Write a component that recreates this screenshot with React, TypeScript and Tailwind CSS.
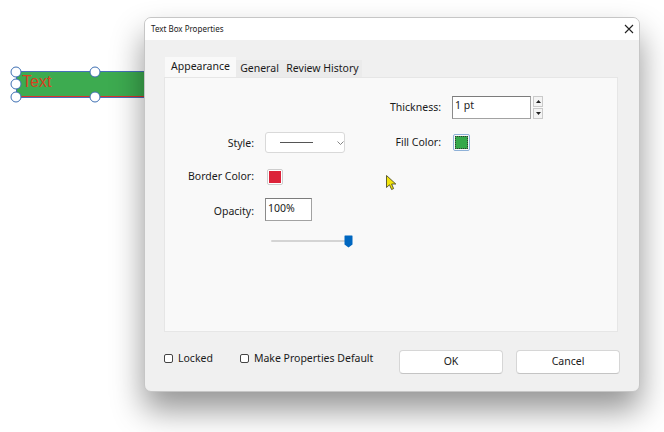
import React from "react";

const ui = "font-['Noto_Sans','Open_Sans',sans-serif]";

function Handle({ x, y }: { x: number; y: number }) {
  return (
    <div
      className="absolute h-[11px] w-[11px] -translate-x-1/2 -translate-y-1/2 rounded-full border-[1.5px] border-[#3d6fb3] bg-white"
      style={{ left: x, top: y }}
    />
  );
}

function Checkbox({ label }: { label: string }) {
  return (
    <label className="flex items-center gap-[5px] text-[10.5px] leading-[14px] text-[#1a1a1a]">
      <span className="h-[9px] w-[9px] rounded-[2px] border border-[#444] bg-white" />
      {label}
    </label>
  );
}

function Button({ children }: { children: React.ReactNode }) {
  return (
    <button className="flex h-[24px] w-[104px] items-center justify-center rounded-[4px] border border-[#d6d6d6] border-b-[#c4c4c4] bg-white text-[10.5px] text-[#1a1a1a]">
      {children}
    </button>
  );
}

function Label({ w, children, down = "" }: { w: string; children: React.ReactNode; down?: string }) {
  return <span className={`${w} ${down} shrink-0 text-right text-[10.5px] text-[#1a1a1a]`}>{children}</span>;
}

export default function App() {
  return (
    <div className={`relative h-[432px] w-[664px] overflow-hidden bg-white ${ui}`}>
      {/* text box on the canvas */}
      <div className="absolute left-[16px] top-[71px] flex h-[27px] w-[140px] flex-col border-l border-t border-[#4670b8] bg-[#3dab50]">
        <div className="flex-1 pl-[5px] pt-[2px] font-['Liberation_Sans',Arial,sans-serif] text-[16px] leading-[16px] text-[#d8411f]">
          Text
        </div>
        <div className="h-[1px] bg-[#d8342c]" />
        <div className="h-[1px] bg-[#4670b8]" />
      </div>
      <Handle x={16} y={71.5} />
      <Handle x={95} y={71.5} />
      <Handle x={16} y={83.5} />
      <Handle x={16} y={97} />
      <Handle x={95} y={97} />

      {/* dialog window */}
      <div className="absolute left-[144px] top-[17px] flex h-[375px] w-[496px] flex-col overflow-hidden rounded-[7px] border border-[#c6c6c6] bg-[#f0f0f0] shadow-[0_18px_32px_rgba(0,0,0,0.42)]">
        <div className="flex h-[22px] shrink-0 items-center justify-between bg-white pl-[6px] pr-[4px]">
          <span className="text-[8px] text-[#1a1a1a]">Text Box Properties</span>
          <svg width="10" height="10" viewBox="0 0 10 10" className="mr-[1px]">
            <path d="M1 1L9 9M9 1L1 9" stroke="#222" strokeWidth="1.1" />
          </svg>
        </div>

        <div className="flex flex-1 flex-col px-[19px] pt-[17px]">
          {/* tabs */}
          <div className="flex h-[20px] items-end pl-[1px] text-[10.5px] text-[#1a1a1a]">
            <div className="flex h-[20px] w-[71px] items-center justify-center bg-[#f9f9f9]">Appearance</div>
            <div className="flex h-[17px] w-[47px] items-center justify-center bg-[#ebebeb] pt-[1px]">General</div>
            <div className="flex h-[17px] w-[79px] items-center justify-center bg-[#ebebeb] pt-[1px]">Review History</div>
          </div>

          {/* panel */}
          <div className="mr-[2px] flex h-[255px] border border-[#e6e6e6] bg-[#f9f9f9]">
            <div className="flex w-[180px] shrink-0 flex-col pt-[54px]">
              <div className="flex h-[21px] items-center">
                <Label w="w-[89px]" down="pt-[2px]">Style:</Label>
                <div className="ml-[11px] flex h-[21px] w-[80px] shrink-0 items-center rounded-[3px] border border-[#d9d9d9] bg-white">
                  <div className="ml-[14px] h-[1px] w-[33px] bg-[#555]" />
                  <svg width="7" height="4" viewBox="0 0 7 4" className="ml-[24px]">
                    <path d="M0.5 0.5L3.5 3.5L6.5 0.5" stroke="#777" fill="none" strokeWidth="0.9" />
                  </svg>
                </div>
              </div>
              <div className="mt-[16px] flex h-[16px] items-center">
                <Label w="w-[89px]">Border Color:</Label>
                <div className="ml-[13px] h-[16px] w-[16px] shrink-0 rounded-[2px] border border-[#cdcdcd] bg-white p-[1px]">
                  <div className="h-full w-full bg-[#dc2239]" />
                </div>
              </div>
              <div className="mt-[13px] flex h-[23px] items-center">
                <Label w="w-[89px]" down="pt-[5px]">Opacity:</Label>
                <div className="ml-[11px] h-[23px] w-[47px] shrink-0 border border-[#a2a2a2] border-t-[#7c7c7c] border-l-[#8a8a8a] bg-white pl-[2px] pt-[2px] text-[10.5px] leading-[15px] text-[#1a1a1a]">
                  100%
                </div>
              </div>
              <div className="mt-[14px] flex h-[13px] items-center pl-[106px]">
                <div className="relative h-[13px] w-[82px] shrink-0">
                  <div className="absolute left-0 top-[5px] h-[2px] w-[79px] rounded-full bg-[#d4d4d4]" />
                  <svg width="9" height="13" viewBox="0 0 9 13" className="absolute right-0 top-0">
                    <path d="M1 0.5H8a0.5 0.5 0 0 1 0.5 0.5V9.5L4.5 12.5L0.5 9.5V1a0.5 0.5 0 0 1 0.5-0.5Z" fill="#0067c0" />
                  </svg>
                </div>
              </div>
            </div>

            <div className="flex flex-col pt-[18px]">
              <div className="flex h-[23px] items-center">
                <Label w="w-[96px]" down="pt-[1px]">Thickness:</Label>
                <div className="ml-[11px] h-[23px] w-[79px] shrink-0 border border-[#a2a2a2] border-t-[#7c7c7c] border-l-[#8a8a8a] bg-white pl-[2px] pt-[1px] text-[10.5px] leading-[15px] text-[#1a1a1a]">
                  1 pt
                </div>
                <div className="ml-[2px] flex h-[23px] w-[10px] shrink-0 flex-col gap-[1px]">
                  <div className="flex flex-1 items-center justify-center border border-[#cacaca] bg-[#f4f4f4]">
                    <svg width="5" height="3" viewBox="0 0 5 3"><path d="M0 3L2.5 0L5 3Z" fill="#222" /></svg>
                  </div>
                  <div className="flex flex-1 items-center justify-center border border-[#cacaca] bg-[#f4f4f4]">
                    <svg width="5" height="3" viewBox="0 0 5 3"><path d="M0 0L2.5 3L5 0Z" fill="#222" /></svg>
                  </div>
                </div>
              </div>
              <div className="mt-[15px] flex h-[17px] items-center">
                <Label w="w-[96px]">Fill Color:</Label>
                <div className="ml-[12px] h-[17px] w-[17px] shrink-0 rounded-[2px] border border-[#8fb1d8] p-[1px]">
                  <div className="h-full w-full border border-dotted border-[#333] bg-[#35a84a]" />
                </div>
              </div>
            </div>
          </div>

          {/* footer */}
          <div className="mt-[18px] flex h-[24px] items-start">
            <div className="mt-[1px] flex gap-[27px]">
              <Checkbox label="Locked" />
              <Checkbox label="Make Properties Default" />
            </div>
            <div className="ml-auto flex gap-[13px]">
              <Button>OK</Button>
              <Button>Cancel</Button>
            </div>
          </div>
        </div>
      </div>

      {/* mouse pointer */}
      <svg width="12" height="16" viewBox="0 0 12 16" className="absolute left-[386px] top-[175px]">
        <path d="M0.5 0.5V12.5L3.5 9.8L5.6 14.5L7.6 13.6L5.6 9H9.8Z" fill="#f3e40b" stroke="#3a3a1a" strokeWidth="0.8" strokeLinejoin="round" />
      </svg>
    </div>
  );
}
